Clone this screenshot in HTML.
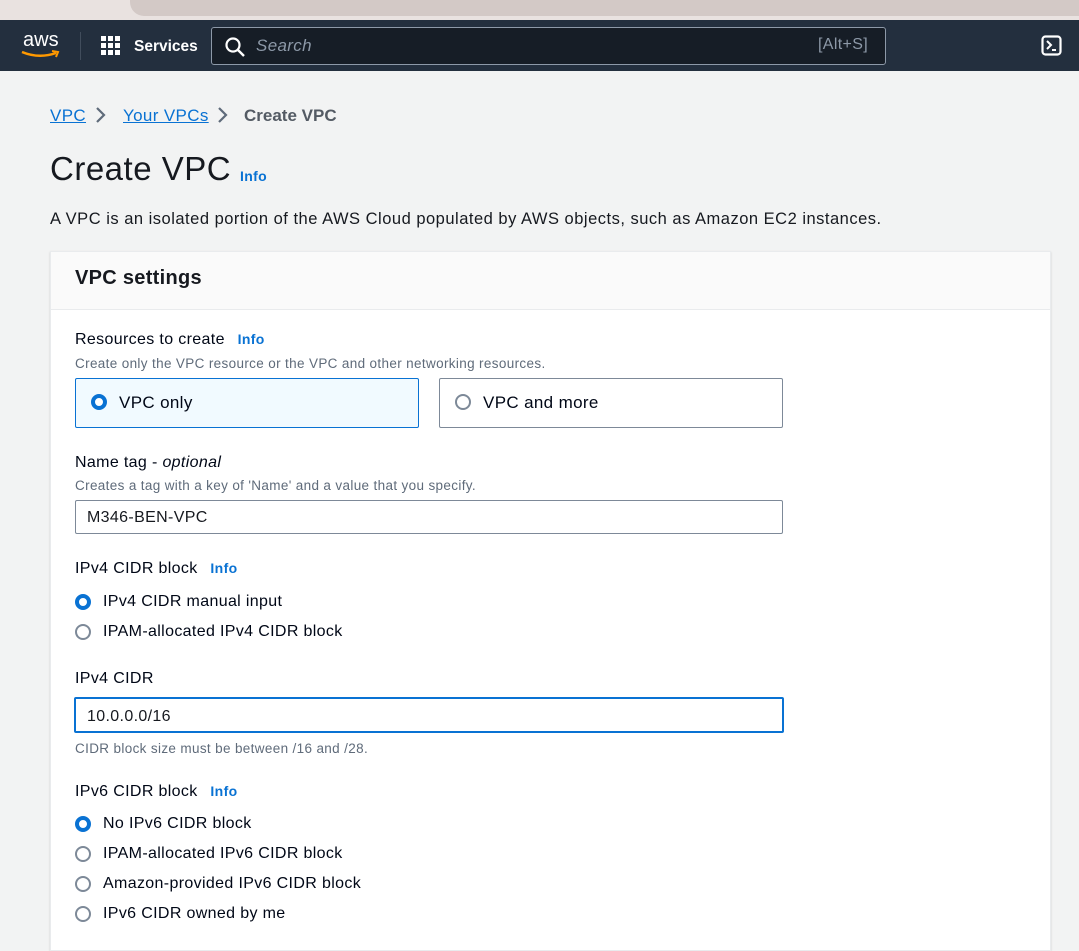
<!DOCTYPE html>
<html><head><meta charset="utf-8"><style>
*{margin:0;padding:0;box-sizing:border-box}
body{width:1079px;height:936px;overflow:hidden;background:#f2f3f3;font-family:"Liberation Sans",sans-serif;color:#16191f;position:relative;letter-spacing:0.35px}
.a{position:absolute;white-space:nowrap}
.lnk{color:#0972d3;text-decoration:underline}
.info{color:#0972d3;font-weight:bold;font-size:14px}
.lbl{font-size:16px;color:#000716}
.desc{font-size:13.5px;color:#5f6b7a}
.rad{position:absolute;width:16px;height:16px;border-radius:50%;border:2px solid #7d8998;background:#fff}
.rad.on{border:4.5px solid #0972d3}
.inp{position:absolute;background:#fff;border:1px solid #7d8998;border-radius:2px;font-size:16px;padding-left:11px}
</style></head><body>
<div class="a" style="left:0;top:0;width:1079px;height:20px;background:#e9e2e0"></div>
<div class="a" style="left:130px;top:0;width:949px;height:16px;background:#d3c9c6;border-radius:0 0 0 14px"></div>
<div class="a" style="left:0;top:20px;width:1079px;height:51px;background:#232f3e"></div>
<div class="a" style="left:23px;top:29px;color:#fff;font-size:20px;letter-spacing:0">aws</div>
<svg class="a" style="left:21px;top:50px" width="40" height="9"><path d="M1 2 Q18 9 35 3" stroke="#f90" stroke-width="2.5" fill="none"/><path d="M31 1 L37 2 L35 7" stroke="#f90" stroke-width="2" fill="none"/></svg>
<div class="a" style="left:80px;top:32px;width:1px;height:28px;background:#414d5c"></div>
<svg class="a" style="left:101px;top:36px" width="20" height="20" fill="#fff"><rect x="0" y="0" width="5" height="5"/><rect x="7" y="0" width="5" height="5"/><rect x="14" y="0" width="5" height="5"/><rect x="0" y="7" width="5" height="5"/><rect x="7" y="7" width="5" height="5"/><rect x="14" y="7" width="5" height="5"/><rect x="0" y="14" width="5" height="5"/><rect x="7" y="14" width="5" height="5"/><rect x="14" y="14" width="5" height="5"/></svg>
<div class="a" style="left:134px;top:38px;color:#fff;font-size:15.5px;font-weight:bold;letter-spacing:0">Services</div>
<div class="a" style="left:211px;top:27px;width:675px;height:38px;background:#161d26;border:1px solid #8d99a8;border-radius:3px"></div>
<svg class="a" style="left:224px;top:36px" width="22" height="22"><circle cx="9" cy="9" r="6.5" stroke="#fff" stroke-width="2.2" fill="none"/><path d="M14 14 L20 20" stroke="#fff" stroke-width="2.4"/></svg>
<div class="a" style="left:256px;top:36px;color:#8d99a8;font-size:17px;font-style:italic">Search</div>
<div class="a" style="left:818px;top:36px;color:#8d99a8;font-size:16px">[Alt+S]</div>
<svg class="a" style="left:1041px;top:35px" width="22" height="22"><rect x="1.5" y="1.5" width="18" height="18" rx="3" stroke="#fff" stroke-width="2.2" fill="none"/><path d="M6 6 L10 10 L6 14" stroke="#fff" stroke-width="2" fill="none"/><path d="M11 15 L15 15" stroke="#fff" stroke-width="2"/></svg>

<div class="a lnk" style="left:50px;top:106px;font-size:17px">VPC</div>
<svg class="a" style="left:94px;top:106px" width="14" height="18"><path d="M3 2 L10 9 L3 16" stroke="#5f6b7a" stroke-width="2.2" fill="none"/></svg>
<div class="a lnk" style="left:123px;top:106px;font-size:17px">Your VPCs</div>
<svg class="a" style="left:216px;top:106px" width="14" height="18"><path d="M3 2 L10 9 L3 16" stroke="#5f6b7a" stroke-width="2.2" fill="none"/></svg>
<div class="a" style="left:244px;top:106px;font-size:17px;font-weight:bold;color:#545b64;letter-spacing:0">Create VPC</div>
<div class="a" style="left:50px;top:150px;font-size:33px;color:#16191f;letter-spacing:0.5px">Create VPC</div>
<div class="a info" style="left:240px;top:168px">Info</div>
<div class="a" style="left:50px;top:210px;font-size:16.5px;color:#16191f;letter-spacing:0.5px">A VPC is an isolated portion of the AWS Cloud populated by AWS objects, such as Amazon EC2 instances.</div>

<div class="a" style="left:50px;top:251px;width:1001px;height:700px;background:#fff;border:1px solid #e9ebed;box-shadow:0 1px 2px rgba(0,0,0,.15)"></div>
<div class="a" style="left:51px;top:252px;width:999px;height:58px;background:#fafafa;border-bottom:1px solid #e9ebed"></div>
<div class="a" style="left:75px;top:267px;font-size:20px;font-weight:bold;color:#16191f;letter-spacing:0.3px">VPC settings</div>

<div class="a lbl" style="left:75px;top:331px">Resources to create <span class="info" style="margin-left:8px">Info</span></div>
<div class="a desc" style="left:75px;top:356px">Create only the VPC resource or the VPC and other networking resources.</div>
<div class="a" style="left:75px;top:378px;width:344px;height:50px;background:#f1faff;border:1px solid #0972d3;border-radius:2px"></div>
<div class="rad on" style="left:91px;top:394px"></div>
<div class="a lbl" style="left:119px;top:393px;font-size:17px">VPC only</div>
<div class="a" style="left:439px;top:378px;width:344px;height:50px;background:#fff;border:1px solid #7d8998;border-radius:2px"></div>
<div class="rad" style="left:455px;top:394px"></div>
<div class="a lbl" style="left:483px;top:393px;font-size:17px">VPC and more</div>

<div class="a lbl" style="left:75px;top:454px">Name tag - <i>optional</i></div>
<div class="a desc" style="left:75px;top:478px">Creates a tag with a key of 'Name' and a value that you specify.</div>
<div class="inp" style="left:75px;top:500px;width:708px;height:34px;line-height:34px">M346-BEN-VPC</div>

<div class="a lbl" style="left:75px;top:560px">IPv4 CIDR block <span class="info" style="margin-left:8px">Info</span></div>
<div class="rad on" style="left:75px;top:594px"></div>
<div class="a lbl" style="left:103px;top:593px">IPv4 CIDR manual input</div>
<div class="rad" style="left:75px;top:624px"></div>
<div class="a lbl" style="left:103px;top:623px">IPAM-allocated IPv4 CIDR block</div>

<div class="a lbl" style="left:75px;top:670px">IPv4 CIDR</div>
<div class="inp" style="left:74px;top:697px;width:710px;height:36px;line-height:36px;border:2px solid #0972d3">10.0.0.0/16</div>
<div class="a desc" style="left:75px;top:741px">CIDR block size must be between /16 and /28.</div>

<div class="a lbl" style="left:75px;top:783px">IPv6 CIDR block <span class="info" style="margin-left:8px">Info</span></div>
<div class="rad on" style="left:75px;top:816px"></div>
<div class="a lbl" style="left:103px;top:815px">No IPv6 CIDR block</div>
<div class="rad" style="left:75px;top:846px"></div>
<div class="a lbl" style="left:103px;top:845px">IPAM-allocated IPv6 CIDR block</div>
<div class="rad" style="left:75px;top:876px"></div>
<div class="a lbl" style="left:103px;top:875px">Amazon-provided IPv6 CIDR block</div>
<div class="rad" style="left:75px;top:906px"></div>
<div class="a lbl" style="left:103px;top:905px">IPv6 CIDR owned by me</div>
</body></html>
